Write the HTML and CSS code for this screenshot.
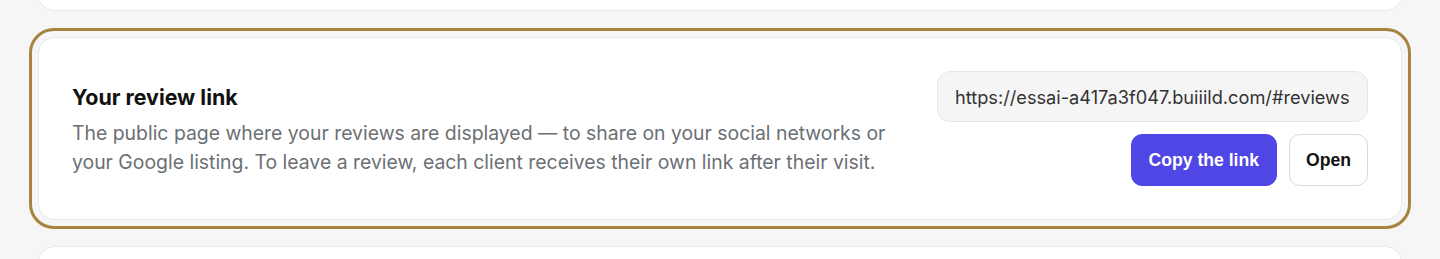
FILE: index.html
```html
<!DOCTYPE html>
<html lang="en">
  <head>
    <meta charset="UTF-8" />
    <meta name="viewport" content="width=device-width, initial-scale=1.0" />
    <title>Review link</title>
    <link rel="stylesheet" href="styles.css">
  </head>
  <body>
    <div class="page">
      <div class="card card-prev"></div>

      <section class="card card-focus">
        <div class="link-info">
          <h2 class="link-title">Your review link</h2>
          <p class="link-desc">The public page where your reviews are displayed — to share on your social networks or your Google listing. To leave a review, each client receives their own link after their visit.</p>
        </div>
        <div class="link-actions">
          <input class="link-url" type="text" value="https://essai-a417a3f047.buiiild.com/#reviews" readonly>
          <div class="link-buttons">
            <button class="btn btn-primary">Copy the link</button>
            <button class="btn btn-ghost">Open</button>
          </div>
        </div>
      </section>

      <div class="card card-next"></div>
    </div>
  </body>
</html>
```

FILE: styles.css
```css
* {
  margin: 0;
  padding: 0;
  box-sizing: border-box;
}
body {
  background-color: #f6f6f6;
  font-family: Inter, "Liberation Sans", sans-serif;
}
.page {
  display: flex;
  flex-direction: column;
  gap: 26px;
  padding: 0 38px;
  margin-top: -69px;
  height: 328px;
  overflow: hidden;
}
.card {
  background-color: #fff;
  border: 1px solid #e8e8e8;
  border-radius: 16px;
  flex-shrink: 0;
}
.card-prev,
.card-next {
  height: 80px;
}
.card-focus {
  display: flex;
  justify-content: space-between;
  align-items: center;
  padding: 33px;
  outline: 3px solid #a8823f;
  outline-offset: 6px;
}
.link-info {
  padding-top: 3px;
}
.link-title {
  font-size: 21.4px;
  line-height: 28px;
  font-weight: 700;
  color: #111;
  margin-bottom: 8px;
}
.link-desc {
  max-width: 830px;
  font-size: 19.4px;
  line-height: 29px;
  color: #6b7075;
}
.link-actions {
  display: flex;
  flex-direction: column;
  align-items: flex-end;
  gap: 12px;
}
.link-url {
  width: 431px;
  height: 51px;
  padding: 0 15px 0 17px;
  background-color: #f5f5f5;
  border: 1px solid #e6e6e6;
  border-radius: 13px;
  font-family: Inter, sans-serif;
  font-size: 18.2px;
  color: #333;
  outline: none;
}
.link-buttons {
  display: flex;
  gap: 12px;
}
.btn {
  height: 52px;
  padding: 0 17px;
  border-radius: 11px;
  font-family: "Liberation Sans", Arial, sans-serif;
  font-size: 17.6px;
  font-weight: 700;
  cursor: pointer;
}
.btn-primary {
  background-color: #4f46e5;
  border: 1px solid #4f46e5;
  color: #fff;
}
.btn-ghost {
  padding: 0 16px;
  background-color: #fff;
  border: 1px solid #d9d9d9;
  color: #111;
}
```
